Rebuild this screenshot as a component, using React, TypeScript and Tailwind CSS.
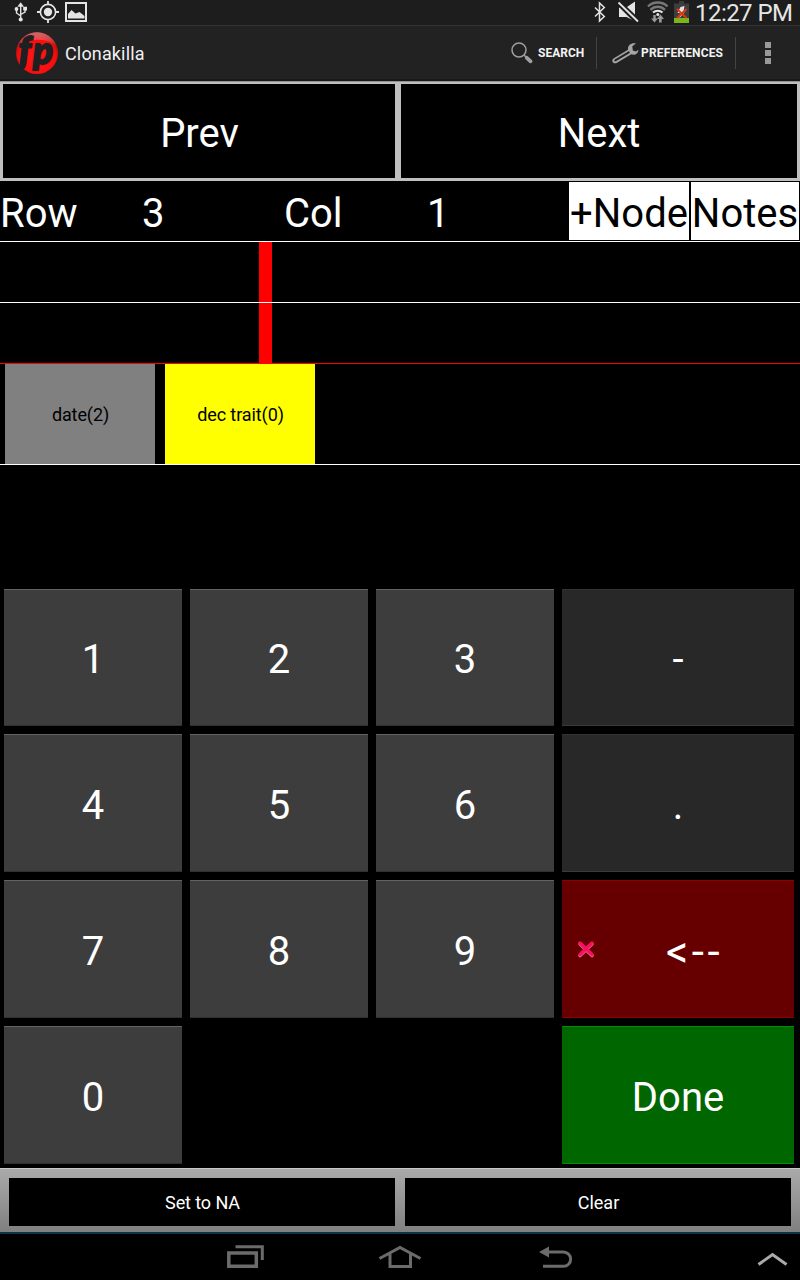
import type { ReactNode } from "react";

function StatusBar() {
  return (
    <div className="flex h-[26px] shrink-0 items-center border-b border-[#333] bg-[#1d1d1d]">
      <svg className="h-[25px] w-[100px]" viewBox="0 0 100 25" fill="none" stroke="#e4e4e4">
        <g strokeWidth="1.4">
          <path d="M20.700 4v15M16.500 9.500v3.500l4.200 3M25 9v3l-4.300 2.500" />
          <path d="M18.800 6l1.900-2.500L22.600 6z" fill="#e4e4e4" />
          <circle cx="16.500" cy="9" r="1.200" fill="#e4e4e4" />
          <circle cx="20.700" cy="19.500" r="1.400" fill="#e4e4e4" />
          <path d="M23.900 7.400h2.400v2.400h-2.400z" fill="#e4e4e4" />
        </g>
        <circle cx="48" cy="12" r="7.600" strokeWidth="1.600" />
        <circle cx="48" cy="12" r="4.200" fill="#e4e4e4" stroke="none" />
        <path d="M48 1v4M48 19v4M37 12h4M55 12h4" strokeWidth="1.800" />
        <path d="M66 3h20v18H66z" strokeWidth="2" />
        <path d="M68 18.500V14l3.500-4 4 3.500 4-1.500 5 4v2.500z" fill="#e4e4e4" stroke="none" />
      </svg>
      <svg className="ml-auto h-[25px] w-[104px]" viewBox="590 0 104 25" fill="none">
        <path d="M595 7.500l9.300 9-4.800 4.500V3l4.800 4.500-9.300 9" stroke="#e4e4e4" strokeWidth="1.500" />
        <path d="M619 7.500h3.500l13 12.500v1.500L626.500 17H619zM627 7l8-5.500v13z" fill="#e4e4e4" />
        <path d="M617.500 3l20 20" stroke="#1d1d1d" strokeWidth="3.600" />
        <path d="M618.500 2.500L638 21.500" stroke="#e4e4e4" strokeWidth="1.800" />
        <g strokeWidth="2.400">
          <path d="M648 6.500c5-5.300 14.500-5.300 19.500 0" stroke="#777" />
          <path d="M650.500 9.800c4-4 10.500-4 14.500 0" stroke="#777" />
          <path d="M653 12.500c2.700-2.500 7-2.500 9.500 0" stroke="#e4e4e4" strokeWidth="2" />
        </g>
        <circle cx="657.800" cy="14.500" r="1.500" fill="#e4e4e4" />
        <path d="M653.300 15h2.400v3.500h2.200l-3.400 4-3.400-4h2.200zM659 22.500v-3.500h-2.200l3.700-4.500 3.500 4.500h-2.300v3.500z" fill="#999" />
        <path d="M679 1h5v2.500h5V18h-15V3.500h5z" fill="#3d3d3d" />
        <path d="M674 18h15v5h-15z" fill="#7ab61b" />
        <path d="M680.500 7l4-1-1 5h2l-6 7 .5-5h-2.500z" fill="#e4e4e4" />
        <path d="M677 9l9.500 9M686.500 9L677 18" stroke="#dd3610" strokeWidth="1.900" />
      </svg>
      <span className="ml-px w-[105px] whitespace-nowrap pt-[2px] text-[24px] leading-[25px] tracking-[-0.55px] text-[#e6e6e6]">12:27 PM</span>
    </div>
  );
}

function Logo() {
  return (
    <svg className="ml-[15px] size-[44px] overflow-visible" viewBox="0 0 44 44">
      <defs>
        <radialGradient id="ball" cx="50%" cy="60%" r="58%">
          <stop offset="0" stopColor="#ff1a1a" />
          <stop offset=".75" stopColor="#f80d0d" />
          <stop offset="1" stopColor="#9c1010" />
        </radialGradient>
        <linearGradient id="shine" x1="0" y1="0" x2="0" y2="1">
          <stop offset="0" stopColor="#fff" stopOpacity=".4" />
          <stop offset="1" stopColor="#fff" stopOpacity=".08" />
        </linearGradient>
      </defs>
      <circle cx="22" cy="22" r="21" fill="url(#ball)" />
      <path d="M3 14a20.500 20.500 0 0 1 38 0C31 7 13 7 3 14z" fill="url(#shine)" />
      <g fill="#1e2022" strokeLinejoin="round" fontWeight="900" fontStyle="italic" fontFamily="Lato, sans-serif">
        <text x="3.500" y="33" fontSize="37" stroke="#1e2022" strokeWidth="1.800">f</text>
        <text x="18" y="33" fontSize="37" stroke="#f01010" strokeWidth="3.600">p</text>
        <text x="18" y="33" fontSize="37" stroke="#1e2022" strokeWidth="1.800">p</text>
      </g>
    </svg>
  );
}

function ActionBar() {
  return (
    <div className="flex h-[55px] shrink-0 items-center border-b-2 border-[#191919] bg-[#222]">
      <Logo />
      <span className="ml-[6px] pt-[2px] text-[18px] tracking-[0.15px] text-[#f1f1f1]">Clonakilla</span>
      <div className="ml-auto flex items-center text-[12px] font-bold text-[#f3f3f3]">
        <svg className="h-6 w-[24px]" viewBox="0 0 24 24" fill="none" stroke="#a0a0a0">
          <circle cx="9" cy="9" r="7" strokeWidth="1.500" />
          <path d="M14 14l2.500 2.500" strokeWidth="1.500" />
          <path d="M16.800 16.800l3.800 3.500" strokeWidth="3.800" strokeLinecap="round" />
        </svg>
        <span className="ml-[4px] w-[47px] whitespace-nowrap">SEARCH</span>
        <span className="ml-[11px] h-8 w-px bg-[#444]" />
        <svg className="ml-[14px] h-6 w-[29px]" viewBox="0 0 29 24">
          <path d="M25 2.500l-3.700 2.700.5 4.300 3.200 1 2.500-1.800c-.2 4-4 6-7.200 4.600L6 21.700c-3.500 2-6.500-2-3.500-4.300L17 8.700c-.5-4.700 3.500-7.500 8-6.200z" fill="#a5a5a5" />
          <path d="M4.300 19.300l13.500-7.900" stroke="#222" strokeWidth="2" strokeLinecap="round" />
        </svg>
        <span className="ml-px w-[83px] whitespace-nowrap tracking-[0.16px]">PREFERENCES</span>
        <span className="ml-[11px] h-8 w-px bg-[#444]" />
        <span className="ml-[29px] mr-[29px] flex flex-col gap-[2px]">
          <i className="size-[6px] bg-[#999]" />
          <i className="size-[6px] bg-[#999]" />
          <i className="size-[6px] bg-[#999]" />
        </span>
      </div>
    </div>
  );
}

const tones = {
  digit: "bg-[#3d3d3d] border-t-[#636363] border-b-[#303030]",
  symbol: "bg-[#282828] border-t-[#333] border-b-[#3a3a3a]",
  erase: "bg-[#660000] border-t-[#8c0000] border-b-[#8c0000]",
  done: "bg-[#006600] border-t-[#008c00] border-b-[#008c00]",
};

function Key({ tone = "digit", children }: { tone?: keyof typeof tones; children: ReactNode }) {
  return (
    <button className={`relative flex items-center justify-center border-y pt-[5px] text-[40px] leading-none text-white ${tones[tone]}`}>
      {children}
    </button>
  );
}

function NavBar() {
  return (
    <div className="h-[48px] shrink-0 border-t-2 border-[#0b3448] bg-black">
      <svg className="h-[46px] w-full" viewBox="0 1234 800 46" fill="none" stroke="#6b6b6b" strokeWidth="3.500">
        <path d="M228.800 1253h27.500v13.300h-27.500z" />
        <path d="M235.500 1246.700h26.800V1260" strokeWidth="3" />
        <path d="M379.500 1258.500l20.500-11 20.500 11M390 1253v13.500h20.500V1253" strokeWidth="3" />
        <path d="M547 1252h16.500a7 7 0 0 1 0 14.300H543" strokeWidth="3" />
        <path d="M539 1252l10-5.500v11z" fill="#6b6b6b" stroke="none" />
        <path d="M758.500 1264.500l14-10 14 10" stroke="#aaa" strokeWidth="3" />
      </svg>
    </div>
  );
}

export default function App() {
  return (
    <div className="flex h-[1280px] w-[800px] flex-col overflow-hidden bg-black font-[Roboto,sans-serif] text-white">
      <StatusBar />
      <ActionBar />
      <div className="grid h-[100px] shrink-0 grid-cols-[392px_396px] gap-[6px] border-t border-[#929292] bg-[#bfbfbf] px-[3px] pb-[3px] pt-[2px] text-[40px]">
        <button className="bg-black pl-px pt-[5px]">Prev</button>
        <button className="bg-black pt-[5px]">Next</button>
      </div>
      <div className="flex h-[61px] shrink-0 items-center border-b border-white text-[40px] leading-[58px]">
        <span className="w-[142px] pt-[5px]">Row</span>
        <span className="w-[142px] pt-[5px]">3</span>
        <span className="w-[142px] pt-[5px]">Col</span>
        <span className="w-[143px] pt-[5px] pl-px">1</span>
        <button className="h-[58px] w-[120px] whitespace-nowrap bg-white pt-[3px] text-black">+Node</button>
        <button className="ml-[2px] h-[58px] w-[108px] whitespace-nowrap bg-white pt-[3px] text-black">Notes</button>
      </div>
      <div className="h-[61px] shrink-0 border-b border-white pl-[259px]">
        <div className="h-full w-[13px] bg-[#ff0000]" />
      </div>
      <div className="h-[61px] shrink-0 border-b border-[#ff0000] pl-[259px]">
        <div className="h-full w-[13px] bg-[#ff0000]" />
      </div>
      <div className="flex h-[101px] shrink-0 gap-[10px] border-b border-white pl-[5px] text-[18px] text-black">
        <button className="w-[150px] bg-[#808080] pl-px tracking-[-0.1px]">date(2)</button>
        <button className="w-[150px] bg-[#ffff00] pl-px tracking-[-0.1px]">dec trait(0)</button>
      </div>
      <div className="mt-[124px] grid h-[575px] shrink-0 grid-cols-[178px_178px_178px_232px] grid-rows-[137px_138px_138px_138px] gap-[8px] pl-[4px]">
        <Key>1</Key>
        <Key>2</Key>
        <Key>3</Key>
        <Key tone="symbol">-</Key>
        <Key>4</Key>
        <Key>5</Key>
        <Key>6</Key>
        <Key tone="symbol">.</Key>
        <Key>7</Key>
        <Key>8</Key>
        <Key>9</Key>
        <Key tone="erase">
          <svg className="absolute left-[14px] top-[58px] size-[20px]" viewBox="0 0 20 20" fill="none" strokeLinecap="round">
            <path d="M4 5l12 11.500M16 5L4 16.500" stroke="#ff5c8d" strokeWidth="3.600" />
            <path d="M4 4l12 11.500M16 4L4 15.500" stroke="#f4125e" strokeWidth="3.400" />
          </svg>
          <span className="ml-[33px] text-[44px] tracking-[3.5px]">&lt;--</span>
        </Key>
        <Key>0</Key>
        <span className="col-span-2" />
        <Key tone="done">Done</Key>
      </div>
      <div className="mt-[4px] grid h-[64px] shrink-0 grid-cols-[386px_386px] gap-[10px] border-t border-[#c8c8c8] bg-linear-to-b from-[#aaa] to-[#808080] px-[9px] pb-[6px] pt-[9px] text-[18px]">
        <button className="bg-black pl-px tracking-[-0.1px]">Set to NA</button>
        <button className="bg-black pl-px">Clear</button>
      </div>
      <NavBar />
    </div>
  );
}
